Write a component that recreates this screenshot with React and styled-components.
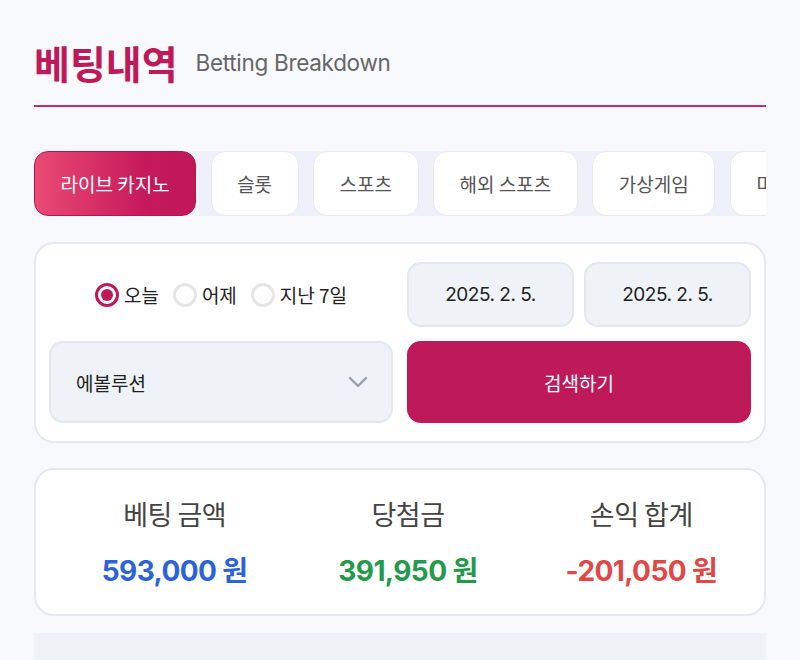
import React, { useState } from 'react';
import styled, { createGlobalStyle } from 'styled-components';

const GlobalStyle = createGlobalStyle`
  * { box-sizing: border-box; }
  body {
    margin: 0;
    background: #f7f9fc;
    font-family: Inter, "Noto Sans CJK KR", sans-serif;
    color: #222;
  }
`;

const Page = styled.div`
  padding: 38px 34px 0;
  height: 660px;
  overflow: hidden;
`;

const Header = styled.div`
  display: flex;
  align-items: center;
  gap: 18px;
  padding-bottom: 19px;
  border-bottom: 2px solid #c2306a;
`;

const Title = styled.h1`
  margin: 0;
  font-size: 39px;
  line-height: 48px;
  font-weight: 700;
  color: #be1a5a;
  font-family: "Noto Sans CJK KR", sans-serif;
`;

const Subtitle = styled.span`
  font-size: 22.5px;
  color: #666;
  letter-spacing: -0.3px;
`;

const TabStrip = styled.div`
  margin-top: 44px;
  display: flex;
  gap: 14.5px;
  overflow: hidden;
  background: #eef1fa;
`;

const Tab = styled.button`
  flex: none;
  height: 65px;
  padding: 0 25.5px;
  border-radius: 14px;
  border: 1px solid ${(p) => (p.$active ? '#b5154f' : '#e6e9f0')};
  background: ${(p) => (p.$active ? 'linear-gradient(90deg, #ea4a74 0%, #c5195a 70%, #bf1857 100%)' : '#fff')};
  color: ${(p) => (p.$active ? '#fff' : '#555')};
  font-family: "Noto Sans CJK KR", sans-serif;
  font-size: 19px;
  cursor: pointer;
`;

const Card = styled.div`
  background: #fff;
  border: 2px solid #e4e9f0;
  border-radius: 20px;
`;

const FilterCard = styled(Card)`
  margin-top: 26px;
  padding: 18px 13px;
  display: grid;
  grid-template-columns: 1fr 1fr;
  grid-template-rows: 65px 82px;
  gap: 14px;
`;

const RadioRow = styled.div`
  display: flex;
  align-items: center;
  justify-content: center;
  gap: 14px;
`;

const RadioLabel = styled.label`
  display: flex;
  align-items: center;
  gap: 5px;
  font-family: "Noto Sans CJK KR", sans-serif;
  font-size: 19px;
  color: #222;
  cursor: pointer;
`;

const RadioDot = styled.span`
  width: 24px;
  height: 24px;
  border-radius: 50%;
  border: ${(p) => (p.$checked ? '3px solid #be1a5a' : '3px solid #e6e6e6')};
  background: #fff;
  display: flex;
  align-items: center;
  justify-content: center;

  &::after {
    content: '';
    width: 12px;
    height: 12px;
    border-radius: 50%;
    background: ${(p) => (p.$checked ? '#be1a5a' : 'transparent')};
  }
`;

const DateRow = styled.div`
  display: grid;
  grid-template-columns: 1fr 1fr;
  gap: 10px;
`;

const DateBox = styled.div`
  background: #eff3f7;
  border: 2px solid #e3e8ee;
  border-radius: 14px;
  display: flex;
  align-items: center;
  justify-content: center;
  font-size: 19px;
  letter-spacing: -0.5px;
  color: #222;
`;

const Select = styled.div`
  background: #eff3f7;
  border: 2px solid #e3e8ee;
  border-radius: 14px;
  display: flex;
  align-items: center;
  justify-content: space-between;
  padding: 0 22px 0 25px;
  font-family: "Noto Sans CJK KR", sans-serif;
  font-size: 19px;
  color: #222;
`;

const SearchButton = styled.button`
  border: none;
  border-radius: 14px;
  background: #be1a5a;
  color: #fff;
  font-family: "Noto Sans CJK KR", sans-serif;
  font-size: 19px;
  cursor: pointer;
`;

const SummaryCard = styled(Card)`
  margin-top: 25px;
  height: 148px;
  display: grid;
  grid-template-columns: repeat(3, 1fr);
  padding: 0 6px 0 22px;
  align-items: center;
`;

const Stat = styled.div`
  display: flex;
  flex-direction: column;
  align-items: center;
  gap: 25px;
`;

const StatLabel = styled.div`
  font-family: "Noto Sans CJK KR", sans-serif;
  font-size: 27px;
  line-height: 32px;
  color: #444;
  letter-spacing: -0.5px;
`;

const StatValue = styled.div`
  font-size: 28px;
  line-height: 32px;
  font-weight: 700;
  letter-spacing: -0.6px;
  color: ${(p) => p.$color};
  font-family: Inter, "Noto Sans CJK KR", sans-serif;
`;

const BottomPanel = styled.div`
  margin-top: 17px;
  height: 60px;
  background: #eff3f7;
`;

const tabs = ['라이브 카지노', '슬롯', '스포츠', '해외 스포츠', '가상게임', '미니게임'];
const ranges = ['오늘', '어제', '지난 7일'];

const stats = [
  { label: '베팅 금액', value: '593,000 원', color: '#2b63d8' },
  { label: '당첨금', value: '391,950 원', color: '#239a4b' },
  { label: '손익 합계', value: '-201,050 원', color: '#e04848' },
];

const Chevron = () => (
  <svg width="22" height="14" viewBox="0 0 22 14" fill="none">
    <path d="M3 3l8 8 8-8" stroke="#9a9ea6" strokeWidth="2.4" strokeLinecap="round" strokeLinejoin="round" />
  </svg>
);

const App = () => {
  const [activeTab, setActiveTab] = useState(0);
  const [range, setRange] = useState(0);

  return (
    <Page>
      <GlobalStyle />
      <Header>
        <Title>베팅내역</Title>
        <Subtitle>Betting Breakdown</Subtitle>
      </Header>

      <TabStrip>
        {tabs.map((t, i) => (
          <Tab key={t} $active={i === activeTab} onClick={() => setActiveTab(i)}>
            {t}
          </Tab>
        ))}
      </TabStrip>

      <FilterCard>
        <RadioRow>
          {ranges.map((r, i) => (
            <RadioLabel key={r} onClick={() => setRange(i)}>
              <RadioDot $checked={i === range} />
              {r}
            </RadioLabel>
          ))}
        </RadioRow>
        <DateRow>
          <DateBox>2025. 2. 5.</DateBox>
          <DateBox>2025. 2. 5.</DateBox>
        </DateRow>
        <Select>
          에볼루션
          <Chevron />
        </Select>
        <SearchButton>검색하기</SearchButton>
      </FilterCard>

      <SummaryCard>
        {stats.map((s) => (
          <Stat key={s.label}>
            <StatLabel>{s.label}</StatLabel>
            <StatValue $color={s.color}>{s.value}</StatValue>
          </Stat>
        ))}
      </SummaryCard>

      <BottomPanel />
    </Page>
  );
};

export default App;
